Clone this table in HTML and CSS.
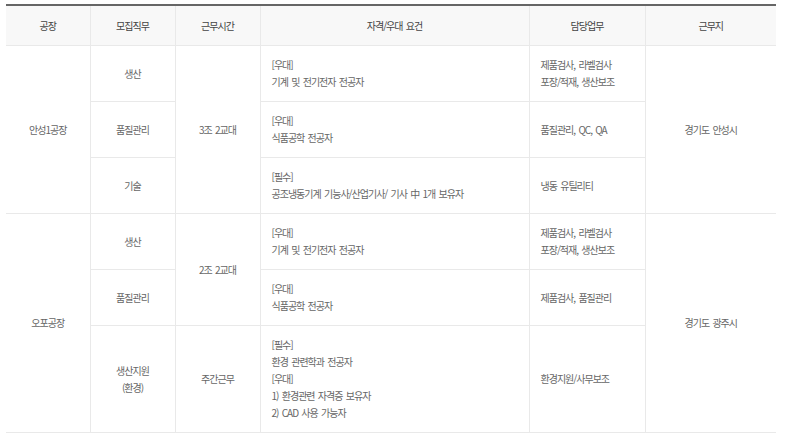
FILE: index.html
```html
<!DOCTYPE html>
<html lang="ko">
<head>
<meta charset="utf-8">
<link rel="stylesheet" href="styles.css">
</head>
<body>
<table class="jobs">
  <colgroup>
    <col class="c1"><col class="c2"><col class="c3"><col class="c4"><col class="c5"><col class="c6">
  </colgroup>
  <thead>
    <tr>
      <th>공장</th><th>모집직무</th><th>근무시간</th><th>자격/우대 요건</th><th>담당업무</th><th>근무지</th>
    </tr>
  </thead>
  <tbody>
    <tr>
      <td rowspan="3" class="first">안성1공장</td>
      <td>생산</td>
      <td rowspan="3">3조 2교대</td>
      <td class="left">[우대]<br>기계 및 전기전자 전공자</td>
      <td class="left">제품검사, 라벨검사<br>포장/적재, 생산보조</td>
      <td rowspan="3" class="last">경기도 안성시</td>
    </tr>
    <tr>
      <td>품질관리</td>
      <td class="left">[우대]<br>식품공학 전공자</td>
      <td class="left">품질관리, QC, QA</td>
    </tr>
    <tr>
      <td>기술</td>
      <td class="left">[필수]<br>공조냉동기계 기능사/산업기사/ 기사 中 1개 보유자</td>
      <td class="left">냉동 유틸리티</td>
    </tr>
    <tr>
      <td rowspan="3" class="first">오포공장</td>
      <td>생산</td>
      <td rowspan="2">2조 2교대</td>
      <td class="left">[우대]<br>기계 및 전기전자 전공자</td>
      <td class="left">제품검사, 라벨검사<br>포장/적재, 생산보조</td>
      <td rowspan="3" class="last">경기도 광주시</td>
    </tr>
    <tr>
      <td>품질관리</td>
      <td class="left">[우대]<br>식품공학 전공자</td>
      <td class="left">제품검사, 품질관리</td>
    </tr>
    <tr>
      <td>생산지원<br>(환경)</td>
      <td>주간근무</td>
      <td class="left">[필수]<br>환경 관련학과 전공자<br>[우대]<br>1) 환경관련 자격증 보유자<br>2) CAD 사용 가능자</td>
      <td class="left">환경지원/사무보조</td>
    </tr>
  </tbody>
</table>
</body>
</html>
```

FILE: styles.css
```css
html, body {
  margin: 0;
  padding: 0;
  background: #fff;
}
body {
  padding: 4px 0 0 6px;
  font-family: "Noto Sans CJK KR", "Noto Sans", sans-serif;
}
.jobs {
  width: 770px;
  border-collapse: collapse;
  table-layout: fixed;
  border-top: 2px solid #666;
  font-size: 10px;
  letter-spacing: -1px;
  word-spacing: 1.5px;
  line-height: 17px;
  color: #666;
}
.c1 { width: 84px; }
.c2 { width: 85px; }
.c3 { width: 85px; }
.c4 { width: 269px; }
.c5 { width: 116px; }
.c6 { width: 131px; }
.jobs th {
  height: 39px;
  padding: 0;
  background: #f8f8f8;
  font-weight: normal;
  color: #444;
  text-align: center;
  border-left: 1px solid #e9e9e9;
  border-bottom: 1px solid #e9e9e9;
}
.jobs th:first-child { border-left: none; }
.jobs td {
  padding: 10px 11px 11px;
  text-align: center;
  vertical-align: middle;
  border: 1px solid #e9e9e9;
}
.jobs td.left { text-align: left; }
.jobs td.first { border-left: none; }
.jobs td.last { border-right: none; }
```
